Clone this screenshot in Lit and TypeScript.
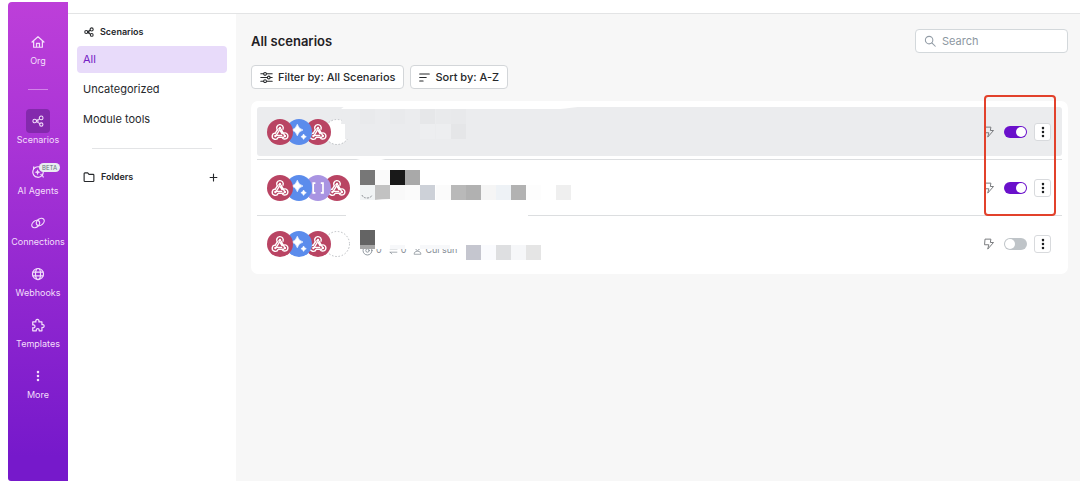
import { LitElement, html, svg, css, nothing } from "lit";
import { customElement, property } from "lit/decorators.js";

const glyphs: Record<string, unknown> = {
  home: svg`<path d="M1.2 8L8 2l6.800 6M3 6.600V14h10V6.600M6.300 14V9.600h3.400V14"/>`,
  share: svg`<circle cx="3.600" cy="8" r="2.400"/><circle cx="12.200" cy="3.900" r="2.500"/><circle cx="12.400" cy="12.700" r="2.200"/>
    <path d="M6 7.200l3.900-2M6 8.800l4.400 2.700M8 6.400v3.400"/>`,
  agent: svg`<path d="M9.500 2.200A6 6 0 1 0 14 8.500"/><path d="M3 4l.2-2M13 12l1 1.800"/>
    <path fill="currentColor" stroke="none" d="M7.500 4.800l1 2.400 2.400 1-2.400 1-1 2.400-1-2.400-2.400-1 2.400-1zM11.500 9.500l.4 1.100 1.100.4-1.100.4-.4 1.100-.4-1.100-1.100-.4 1.100-.4z"/>`,
  link: svg`<ellipse cx="5.400" cy="9.200" rx="5" ry="3.600" transform="rotate(-40 5.400 9.200)"/>
    <ellipse cx="10.600" cy="6.800" rx="5" ry="3.600" transform="rotate(-40 10.600 6.800)"/>`,
  globe: svg`<circle cx="8" cy="8" r="6.300"/><ellipse cx="8" cy="8" rx="2.900" ry="6.300"/><path d="M2.300 5.800h11.400M2.300 10.200h11.400"/>`,
  puzzle: svg`<path d="M2 4.500h3.600C5 2.600 6 1.600 7.300 1.600S9.600 2.600 9 4.500h3.500v3.200c1.600-.5 2.500.4 2.500 1.500s-.9 2-2.500 1.500V14.600H9.300c.4-1.700-.5-2.400-1.600-2.400s-2 .7-1.600 2.400H2v-3.500c1.900.3 2.600-.6 2.600-1.600S3.900 7.600 2 8z"/>`,
  dots: svg`<g fill="currentColor" stroke="none"><circle cx="8" cy="2.800" r="1.700"/><circle cx="8" cy="8" r="1.700"/><circle cx="8" cy="13.200" r="1.700"/></g>`,
  folder: svg`<path d="M1.500 3.500a1 1 0 0 1 1-1h3.800l1.700 2h5.500a1 1 0 0 1 1 1v7.500a1 1 0 0 1-1 1h-11a1 1 0 0 1-1-1z"/>`,
  plus: svg`<path d="M8 2v12M2 8h12"/>`,
  sliders: svg`<path d="M1 3.500h3.500M8 3.500h7M1 8h8M12.500 8H15M1 12.500h3.500M8 12.500h7"/>
    <circle cx="6.200" cy="3.500" r="1.700"/><circle cx="10.800" cy="8" r="1.700"/><circle cx="6.200" cy="12.500" r="1.700"/>`,
  sort: svg`<path d="M1 3h14M1 8h9.500M1 13h5"/>`,
  search: svg`<circle cx="6.800" cy="6.800" r="5"/><path d="M10.500 10.500L15 15"/>`,
  bolt: svg`<path d="M3.200 1.500h7.300L9.800 6h4.200L6.300 14.800 7.800 9H2.600z"/>`,
  person: svg`<circle cx="8" cy="5" r="3"/><path d="M2 14c0-3 2-4.500 6-4.500s6 1.500 6 4.500z"/>`,
  swap: svg`<path d="M2 5h12M11 2l3 3M14 11H2M5 14l-3-3"/>`,
  eye: svg`<circle cx="8" cy="8" r="6.500"/><circle cx="8" cy="8" r="2.500"/>`,
};

const icon = (name: string, size = 14, weight = 1.4) => html`
  <svg class="icon" viewBox="0 0 16 16" width=${size} height=${size} fill="none" stroke="currentColor"
    stroke-width=${weight} stroke-linejoin="round" stroke-linecap="round" aria-hidden="true">${glyphs[name]}</svg>`;

const badges: Record<string, unknown> = {
  hook: svg`<circle cx="13" cy="13" r="13" fill="#b94463"/>
    <g fill="none" stroke="#fff" stroke-width="1.400" stroke-linecap="round" stroke-linejoin="round">
      <path d="M10.300 10.900a3.300 3.300 0 1 1 5.700-.700"/>
      <path d="M11.900 9.600l.5 1.600-3 4.900M10.300 10.900l-2 3.200"/>
      <path d="M8.300 14.100a3.100 3.100 0 1 0 2.900 4.200h5.400"/>
      <path d="M9 16.400h5.600M14 10.200l3.300 5.600M15 14.600l-1.800-3"/>
      <path d="M15.900 14.500a3.100 3.100 0 1 1-.6 4.300"/>
    </g>
    <g fill="#fff"><circle cx="13" cy="9" r="1.200"/><circle cx="8.400" cy="17" r="1.200"/><circle cx="17.900" cy="17" r="1.200"/></g>`,
  ai: svg`<circle cx="13" cy="13" r="13" fill="#5b8cec"/>
    <path fill="#fff" d="M11.300 5.200Q12.500 9.800 17 11 12.500 12.200 11.300 16.800 10.100 12.200 5.600 11 10.100 9.800 11.300 5.200zM17.600 15q.7 2 2.700 2.700-2 .7-2.700 2.700-.7-2-2.700-2.700 2-.7 2.700-2.700z" stroke="#fff" stroke-width=".6"/>`,
  json: svg`<circle cx="13" cy="13" r="13" fill="#a994e2"/>
    <path fill="none" stroke="#fff" stroke-width="1.700" d="M10.400 8.200H8.200v9.600h2.200M15.800 8.200H18v9.600h-2.200"/>`,
  empty: svg`<circle cx="13" cy="13" r="12.500" fill="#fff" stroke="#b9bcc0" stroke-dasharray="1.500 1.800"/>`,
};

/* Each block: column, row, fill; columns and rows are 15 units wide. */
type Block = [number, number, string];

interface Scenario {
  id: string;
  apps: string[];
  on: boolean;
  hot?: boolean;
  blocks: Block[];
  top: number;
  erased: unknown;
  meta?: boolean;
}

const scenarios: Scenario[] = [
  {
    id: "s1", apps: ["hook", "ai", "hook", "empty"], on: true, hot: true, top: 2,
    blocks: [[0, 0, "#e9eaec"], [2, 0, "#e9eaec"], [4, 0, "#e6e7e9"], [5, 0, "#e9eaec"], [6, 0, "#e8e9eb"], [4, 1, "#edeef0"], [5, 1, "#edeef0"], [6, 1, "#e5e6e8"]],
    erased: svg`<path fill="#fff" d="M-15-1H225Q210 1 200 2H-19z"/><path fill="#ebecee" d="M-17 2H0V45H-12V32h-3V17h-4z"/>`,
  },
  {
    id: "s2", apps: ["hook", "ai", "json", "hook"], on: true, top: 7,
    blocks: [[0, 0, "#777"], [1, 0, "#fafafa"], [2, 0, "#191919"], [3, 0, "#a9a9a9"],
      [0, 1, "#f1f4f5"], [1, 1, "#c2c2c2"], [2, 1, "#f9f9f9"], [3, 1, "#fbfbfb"], [4, 1, "#cdd1d8"], [5, 1, "#fbfbfb"], [6, 1, "#b9b9b9"], [7, 1, "#b1b1b1"],
      [8, 1, "#f5f5f5"], [9, 1, "#eef2f6"], [10, 1, "#b2b2b2"], [11, 1, "#fdfdfd"], [13, 1, "#efefef"]],
    erased: svg`<path fill="#fff" d="M-10-1q20-8 42 0v3H-10zM-14 49H168v6H-14z"/><path fill="none" stroke="#8d9196" stroke-dasharray="2 1" d="M2 32q1 3 5 3t5-3"/><path fill="#fff" d="M14 37q8-1 16-1v3H14z"/>`,
  },
  {
    id: "s3", apps: ["hook", "ai", "hook", "empty"], on: false, top: 11, meta: true,
    blocks: [[0, 0, "#646464"], [7, 1, "#c5c6cf"], [8, 1, "#fafbfe"], [9, 1, "#dedfe1"], [10, 1, "#f6f7f9"], [11, 1, "#e5e5e5"]],
    erased: svg`<path fill="#fff" d="M0 26H105v4H0z"/><path fill="#a6a6a6" d="M0 26h15v4H0z"/><path fill="#f7f8fa" d="M30 26h15v4H30zM60 26h30v4H60z"/>`,
  },
];

@customElement("nav-rail")
class NavRail extends LitElement {
  static styles = css`
    :host { display: block; width: 60px; flex: none; border-radius: 4px 0 0 3px; color: #f3dffb;
      background: linear-gradient(#bd3fd9, #a934d6 30%, #9127d0 60%, #7619cb 95%); }
    nav { display: flex; flex-direction: column; align-items: center; padding-top: 28px; }
    a { display: flex; flex-direction: column; align-items: center; margin-bottom: 13px;
      font-size: 9px; line-height: 14px; color: inherit; text-decoration: none; }
    .tile { position: relative; display: grid; place-items: center; width: 24px; height: 24px; border-radius: 4px; }
    .current { background: #8429ad; }
    .rule { width: 20px; height: 1px; margin: 8px 0 19px; border: 0; background: #d284e8; }
    .beta { position: absolute; left: 13px; top: 3px; padding: 0 3px; border-radius: 5px; background: #e9edf0;
      color: #646f79; font-size: 6px; line-height: 9px; }
    .icon { display: block; }
  `;

  item(name: string, label: string, current = false, beta = false) {
    return html`<a href="#" aria-current=${current ? "page" : nothing}>
      <span class="tile ${current ? "current" : ""}">${icon(name, name === "share" || name === "dots" ? 12 : 14)}${beta ? html`<span class="beta">BETA</span>` : nothing}</span>
      ${label}</a>`;
  }

  render() {
    return html`<nav aria-label="Main">
      ${this.item("home", "Org")}
      <hr class="rule" />
      ${this.item("share", "Scenarios", true)}
      ${this.item("agent", "AI Agents", false, true)}
      ${this.item("link", "Connections")}
      ${this.item("globe", "Webhooks")}
      ${this.item("puzzle", "Templates")}
      ${this.item("dots", "More")}
    </nav>`;
  }
}

@customElement("folder-panel")
class FolderPanel extends LitElement {
  static styles = css`
    :host { display: block; box-sizing: border-box; width: 168px; flex: none; padding: 10px 9px 0; background: #fff; color: #26282b; }
    .head { display: flex; align-items: center; gap: 6px; margin: 0; padding: 0 7px; font-size: 9px; font-weight: 600; line-height: 16px; }
    .list { display: flex; flex-direction: column; gap: 3px; margin-top: 6px; }
    .list a { padding: 0 6px; border-radius: 4px; font-size: 11px; line-height: 27px; color: inherit; text-decoration: none; }
    .list .current { background: #e8dbfa; color: #7420c4; }
    .rule { height: 1px; margin: 15px 15px 20px; border: 0; background: #e3e4e6; }
    .folders { justify-content: space-between; padding: 0 9px 0 6px; }
    .name { display: flex; align-items: center; gap: 6px; }
    button { padding: 0; border: 0; background: none; color: inherit; }
    .icon { display: block; }
  `;

  render() {
    return html`
      <h2 class="head">${icon("share", 10, 1.7)} Scenarios</h2>
      <nav class="list" aria-label="Scenarios">
        <a class="current" href="#" aria-current="page">All</a>
        <a href="#">Uncategorized</a>
        <a href="#">Module tools</a>
      </nav>
      <hr class="rule" />
      <h2 class="head folders"><span class="name">${icon("folder", 12, 1.5)} Folders</span>
        <button type="button" aria-label="Add folder">${icon("plus", 9, 2)}</button></h2>`;
  }
}

@customElement("scenario-row")
class ScenarioRow extends LitElement {
  @property({ attribute: false }) item!: Scenario;

  static styles = css`
    :host { display: block; }
    .row { display: flex; align-items: center; box-sizing: border-box; height: 49px; padding: 0 11px 0 10px; border-radius: 3px; }
    .hot { background: #ebecee; }
    .apps { display: flex; flex: none; width: 83px; isolation: isolate; }
    .badge { position: relative; flex: none; width: 26px; height: 26px; margin-right: -7px; }
    .badge:nth-child(1) { z-index: 4; }
    .badge:nth-child(2) { z-index: 3; }
    .badge:nth-child(3) { z-index: 2; }
    .info { position: relative; align-self: stretch; flex: 1; margin-left: 10px; }
    .mosaic { position: absolute; left: 0; top: 0; width: 240px; height: 49px; overflow: visible; }
    .meta { display: flex; align-items: center; gap: 4px; padding: 25px 0 0 2px; color: #858d95; font-size: 9px; line-height: 12px; }
    .meta span { display: flex; align-items: center; gap: 3px; margin-right: 3px; }
    .controls { display: flex; align-items: center; color: #77797c; }
    .switch { appearance: none; box-sizing: border-box; width: 23px; height: 12px; margin: 0 7px 0 9px; border-radius: 6px; background: #bfc4c8; display: flex; align-items: center; padding: 1px; }
    .switch::before { content: ""; width: 10px; height: 10px; border-radius: 50%; background: #fff; }
    .switch:checked { background: #6a10cb; justify-content: flex-end; }
    .more { display: grid; place-items: center; box-sizing: border-box; width: 17px; height: 18px; padding: 0; border: 1px solid #d8dadd; border-radius: 3px; background: #fff; color: #1d1f21; }
    .icon { display: block; }
  `;

  render() {
    const s = this.item;
    return html`<div class="row ${s.hot ? "hot" : ""}">
      <div class="apps">${s.apps.map((a) => html`<svg class="badge" viewBox="0 0 26 26" aria-hidden="true">${badges[a]}</svg>`)}</div>
      <div class="info">
        ${s.meta ? html`<div class="meta"><span>${icon("eye", 11, 1.3)}0</span><span>${icon("swap", 9, 1.3)}0</span><span>${icon("person", 9, 1.3)}Cui sun</span></div>` : nothing}
        <svg class="mosaic" viewBox="0 0 240 49" aria-hidden="true">
          ${s.blocks.map(([c, r, fill]) => svg`<rect x=${c * 15 + Math.round(c / 9)} y=${s.top + r * 15} width="15" height="15" fill=${fill} />`)}
          ${s.erased}
        </svg>
      </div>
      <div class="controls">
        ${icon("bolt", 12, 1.3)}
        <input class="switch" type="checkbox" role="switch" aria-label="Active" .checked=${s.on} />
        <button class="more" type="button" aria-label="Options">${icon("dots", 12, 1)}</button>
      </div>
    </div>`;
  }
}

@customElement("app-root")
class AppRoot extends LitElement {
  static styles = css`
    :host { display: flex; box-sizing: border-box; min-height: 100vh; padding: 2px 0 8px 8px; background: #fff;
      font-family: Inter, "Liberation Sans", sans-serif; color: #1f2124; }
    .page { display: flex; flex-direction: column; flex: 1; min-width: 0; padding-top: 11px; }
    .body { display: flex; flex: 1; border-top: 1px solid #e3e4e5; }
    main { flex: 1; min-width: 0; padding: 15px 12px 20px 15px; background: #f7f7f7; }
    header { display: flex; align-items: center; justify-content: space-between; }
    h1 { margin: 0; font-size: 13px; line-height: 24px; font-weight: 600; }
    .search { display: flex; align-items: center; gap: 6px; box-sizing: border-box; width: 153px; height: 24px; padding: 0 8px;
      border: 1px solid #d3d8db; border-radius: 4px; background: #fff; color: #929ca6; }
    .search input { flex: 1; min-width: 0; padding: 0; border: 0; outline: 0; background: none;
      font: 11px/16px Inter, "Liberation Sans", sans-serif; color: #26282b; }
    .search input::placeholder { color: #8d97a1; opacity: 1; }
    .tools { display: flex; gap: 6px; margin: 12px 0; }
    .tools button { display: flex; align-items: center; gap: 5px; height: 24px; padding: 0 8px; border: 1px solid #d3d6d9; border-radius: 4px;
      background: #fff; color: #26282b; font: 500 11px/16px Inter, "Liberation Sans", sans-serif; }
    .card { position: relative; padding: 6px; border-radius: 7px; background: #fff; }
    .card hr { height: 1px; margin: 3px 0; border: 0; background: #dcdee0; }
    .mark { position: absolute; top: -6px; right: 12px; box-sizing: border-box; width: 72px; height: 121px; border: 2px solid #e2412b; border-radius: 4px; pointer-events: none; }
    .icon { display: block; flex: none; }
  `;

  render() {
    return html`
      <nav-rail></nav-rail>
      <div class="page">
        <div class="body">
          <folder-panel></folder-panel>
          <main>
            <header>
              <h1>All scenarios</h1>
              <label class="search">${icon("search", 12, 1.4)}<input type="search" placeholder="Search" aria-label="Search" /></label>
            </header>
            <div class="tools">
              <button type="button">${icon("sliders", 13, 1.3)} Filter by: All Scenarios</button>
              <button type="button">${icon("sort", 11, 1.5)} Sort by: A-Z</button>
            </div>
            <section class="card" aria-label="Scenario list">
              ${scenarios.map((s, i) => html`${i ? html`<hr />` : nothing}<scenario-row .item=${s}></scenario-row>`)}
              <div class="mark"></div>
            </section>
          </main>
        </div>
      </div>`;
  }
}
